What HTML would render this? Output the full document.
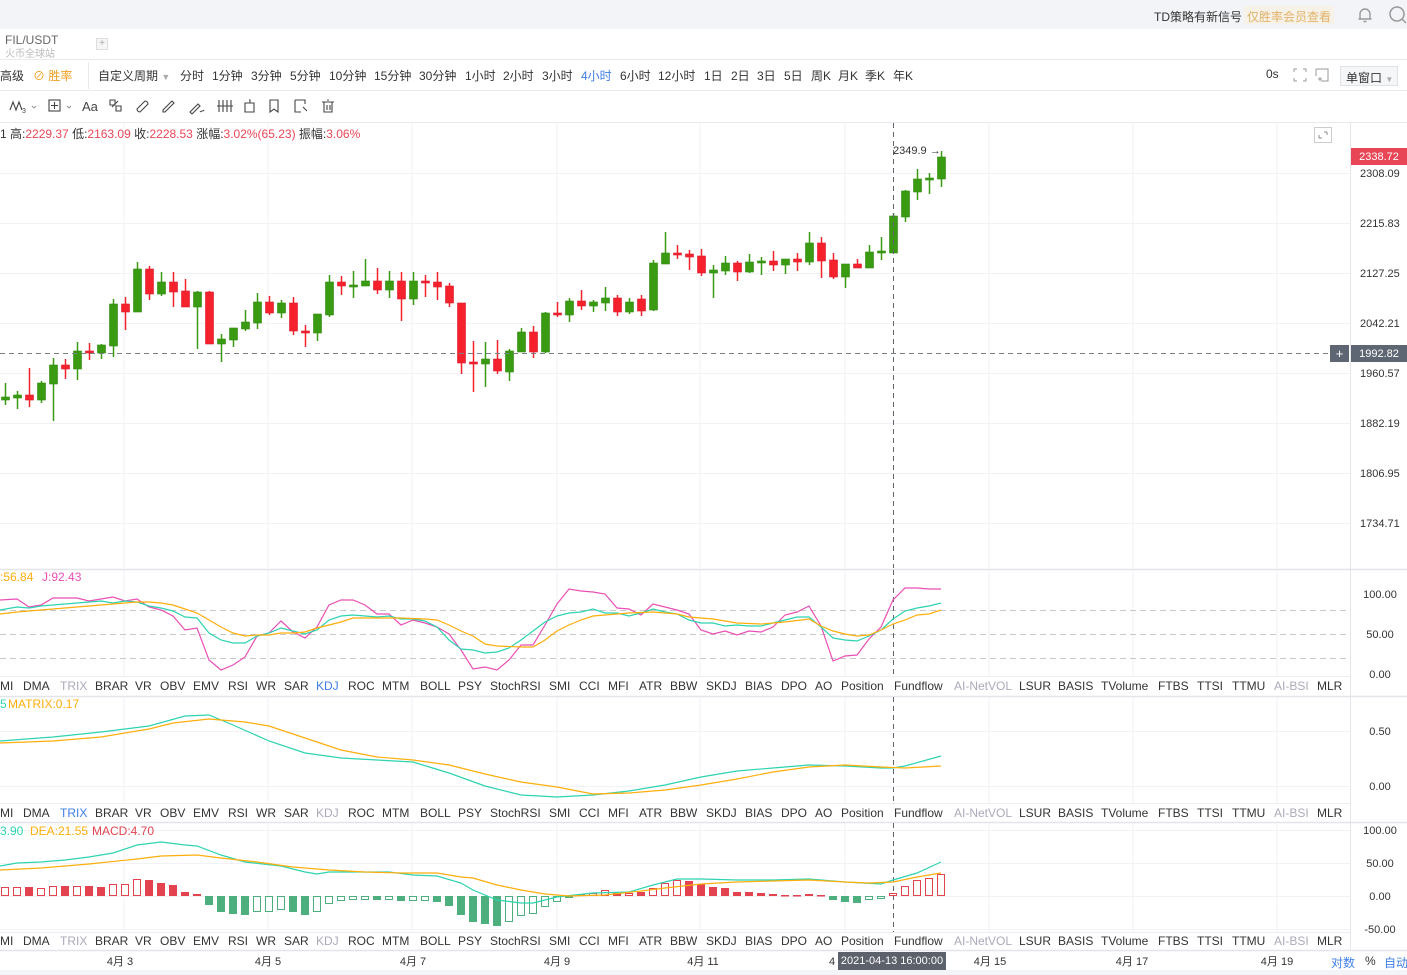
<!DOCTYPE html>
<html><head><meta charset="utf-8">
<style>
*{margin:0;padding:0;box-sizing:border-box}
body{width:1407px;height:975px;overflow:hidden;background:#fff;font-family:"Liberation Sans","Noto Sans CJK SC",sans-serif;font-size:12px;color:#333;position:relative}
.a{position:absolute;white-space:nowrap}
.hl{position:absolute;left:0;width:1407px;height:1px;background:#e8eaee}
.g{color:#aab}
.b{color:#3d7fe6}
.r{color:#e84656}
</style></head><body>
<div class="a" style="left:0;top:0;width:1407px;height:29px;background:#f3f4f7"></div>
<div class="a" style="left:1154px;top:8px;font-size:12px;color:#333">TD策略有新信号</div>
<div class="a" style="left:1244px;top:6px;height:18px;padding:2px 3px;background:#f7f2e8;color:#e0b26a;font-size:12px">仅胜率会员查看</div>
<svg class="a" style="left:1356px;top:6px" width="18" height="18" viewBox="0 0 18 18"><path d="M4 13V8a5 5 0 0 1 10 0v5M2.5 13h13M7.5 15.5h3" fill="none" stroke="#999" stroke-width="1.4"/></svg>
<svg class="a" style="left:1388px;top:5px" width="19" height="19" viewBox="0 0 19 19"><circle cx="9" cy="9" r="7" fill="none" stroke="#999" stroke-width="1.5"/><path d="M14 14l4 4" stroke="#999" stroke-width="1.5"/></svg>

<div class="a" style="left:5px;top:33px;font-size:12px;color:#666">FIL/USDT</div>
<div class="a" style="left:5px;top:45px;font-size:10px;color:#bbb">火币全球站</div>
<div class="a" style="left:96px;top:38px;width:12px;height:12px;border:1px solid #ddd;background:#f6f6f6;color:#aaa;font-size:10px;line-height:10px;text-align:center">+</div>
<div class="hl" style="top:59px"></div>

<div class="a" style="left:0;top:67px">高级</div>
<div class="a" style="left:33px;top:67px;color:#f0a020">⊘ 胜率</div>
<div class="a" style="left:88px;top:62px;width:1px;height:27px;background:#e8eaee"></div>
<div class="a" style="left:98px;top:67px">自定义周期 <span style="color:#aaa;font-size:9px">▼</span></div>
<div class="a" style="left:180px;top:67px">分时</div>
<div class="a" style="left:212px;top:67px">1分钟</div>
<div class="a" style="left:251px;top:67px">3分钟</div>
<div class="a" style="left:290px;top:67px">5分钟</div>
<div class="a" style="left:329px;top:67px">10分钟</div>
<div class="a" style="left:374px;top:67px">15分钟</div>
<div class="a" style="left:419px;top:67px">30分钟</div>
<div class="a" style="left:465px;top:67px">1小时</div>
<div class="a" style="left:503px;top:67px">2小时</div>
<div class="a" style="left:542px;top:67px">3小时</div>
<div class="a b" style="left:581px;top:67px">4小时</div>
<div class="a" style="left:620px;top:67px">6小时</div>
<div class="a" style="left:658px;top:67px">12小时</div>
<div class="a" style="left:704px;top:67px">1日</div>
<div class="a" style="left:731px;top:67px">2日</div>
<div class="a" style="left:757px;top:67px">3日</div>
<div class="a" style="left:784px;top:67px">5日</div>
<div class="a" style="left:811px;top:67px">周K</div>
<div class="a" style="left:838px;top:67px">月K</div>
<div class="a" style="left:865px;top:67px">季K</div>
<div class="a" style="left:893px;top:67px">年K</div>
<div class="a" style="left:1266px;top:67px">0s</div>
<svg class="a" style="left:1293px;top:68px" width="14" height="14"><path d="M1 4V1h3M10 1h3v3M13 10v3h-3M4 13H1v-3" fill="none" stroke="#999"/></svg>
<svg class="a" style="left:1315px;top:68px" width="14" height="14"><path d="M1 1h12v12H6M1 1v7M3 11h4M5 9v4" fill="none" stroke="#999"/></svg>
<div class="a" style="left:1340px;top:66px;width:58px;height:20px;border:1px solid #e0e2e6;background:#f5f6f8;padding:2px 5px;font-size:12px">单窗口 <span style="color:#aaa;font-size:8px">▼</span></div>
<div class="hl" style="top:90px"></div>

<svg class="a" style="left:0;top:94px" width="345" height="24" fill="none" stroke="#444" stroke-width="1.1">
<path d="M10 16l3-8 3 8 3-8 3 8"/><text x="22" y="19" font-size="7" fill="#444" stroke="none">3</text><path d="M32 12l2 2 2-2" stroke="#999"/>
<rect x="49" y="6" width="11" height="11"/><path d="M54.5 8v7M51 11.5h7"/><path d="M67 12l2 2 2-2" stroke="#999"/>
<text x="82" y="17" font-size="13" fill="#444" stroke="none" font-family="Liberation Sans">Aa</text>
<path d="M110 6h5v5h-5zM116 12h5v5h-5zM112 13l6-6"/>
<path d="M137 15l8-8a3 3 0 0 1 3 3l-8 8a3 3 0 0 1-3-3z"/>
<path d="M163 16l9-9 2 2-9 9h-2z"/>
<path d="M190 18l8-8 2 2-8 8zM200 18c2-2 3 0 4-2"/>
<path d="M219 6v12M223 6v12M227 6v12M231 6v12M217 12h16"/>
<path d="M245 9h9v9h-9zM249 6h1v3"/>
<path d="M270 6h8v12l-4-3-4 3z"/>
<path d="M295 6h10v4M295 6v12h6M303 13l4 4"/>
<path d="M322 8h12M324 8v10h8V8M327 6h2M327 11v5M330 11v5"/>
</svg>
<div class="hl" style="top:122px"></div>

<div class="a" style="left:0;top:125px">1 高:<span class="r">2229.37</span> 低:<span class="r">2163.09</span> 收:<span class="r">2228.53</span> 涨幅:<span class="r">3.02%(65.23)</span> 振幅:<span class="r">3.06%</span></div>
<svg class="a" style="left:1314px;top:127px" width="18" height="16"><rect x="0.5" y="0.5" width="17" height="15" fill="#fff" stroke="#ccc"/><path d="M5 11h3M5 11V8M13 5h-3M13 5v3" stroke="#888" fill="none"/></svg>

<svg id="ch" class="a" style="left:0;top:0" width="1407" height="975"></svg>

<div class="a" style="left:0;top:970px;width:1407px;height:5px;background:#f3f4f7"></div>
<div class="a" style="left:838px;top:952px;width:108px;height:18px;background:#5c616b;color:#fff;font-size:11px;line-height:18px;text-align:center">2021-04-13 16:00:00</div>
<div class="a b" style="left:1331px;top:954px">对数</div>
<div class="a" style="left:1365px;top:954px">%</div>
<div class="a b" style="left:1384px;top:954px">自动</div>

<script>
const S=document.getElementById('ch');let h='';
const L=(x1,y1,x2,y2,c,w,d)=>h+=`<line x1="${x1}" y1="${y1}" x2="${x2}" y2="${y2}" stroke="${c}" stroke-width="${w||1}" ${d?'stroke-dasharray="'+d+'"':''}/>`;
const T=(x,y,t,c,s,a)=>h+=`<text x="${x}" y="${y}" fill="${c||'#333'}" font-size="${s||11}" font-family="Liberation Sans, Noto Sans CJK SC, sans-serif" ${a?'text-anchor="'+a+'"':''}>${t}</text>`;
const gx=[124,268,412,557,700,845,989,1133,1277];
gx.forEach(x=>{L(x,123,x,568,'#f0f2f5');L(x,570,x,676,'#f0f2f5');L(x,697,x,803,'#f0f2f5');L(x,823,x,932,'#f0f2f5');});
[173,223,273,323,373,423,473,523].forEach(y=>L(0,y+.5,1350,y+.5,'#f0f2f5'));
[731,786].forEach(y=>L(0,y+.5,1350,y+.5,'#f0f2f5'));
[830,863,896,929].forEach(y=>L(0,y+.5,1350,y+.5,'#f0f2f5'));
[610,634,658].forEach(y=>L(0,y+.5,1350,y+.5,'#c8c8c8',1,'6 4'));
[569,696,822,950].forEach(y=>L(0,y+.5,1407,y+.5,'#e3e5e9',1.5));
[676,803,932].forEach(y=>L(0,y+.5,1350,y+.5,'#eceef1'));
L(1350.5,123,1350.5,950,'#e3e5e9');
[[173,'2308.09'],[223,'2215.83'],[273,'2127.25'],[323,'2042.21'],[373,'1960.57'],[423,'1882.19'],[473,'1806.95'],[523,'1734.71']].forEach(a=>T(1360,a[0]+4,a[1],'#333',11));
[[594,'100.00'],[634,'50.00'],[674,'0.00']].forEach(a=>T(1380,a[0]+4,a[1],'#333',11,'middle'));
[[731,'0.50'],[786,'0.00']].forEach(a=>T(1380,a[0]+4,a[1],'#333',11,'middle'));
[[830,'100.00'],[863,'50.00'],[896,'0.00'],[929,'-50.00']].forEach(a=>T(1380,a[0]+4,a[1],'#333',11,'middle'));
const C=[[397,400,383,405,1],[395,398,391,409,1],[395,400,368,407,0],[383,400,381,403,1],[365,384,358,421,1],[365,369,359,379,0],[351,369,342,380,1],[351,353,343,360,0],[345,353,344,359,1],[304,346,299,357,1],[304,312,297,330,0],[269,312,262,312,1],[269,294,266,300,0],[282,294,272,296,1],[282,292,272,307,0],[291,307,279,307,0],[292,307,291,349,1],[292,344,291,344,0],[339,344,334,362,1],[328,340,328,347,1],[322,329,310,331,1],[302,323,293,329,1],[302,313,296,315,0],[303,313,300,318,1],[303,331,297,335,0],[331,333,325,347,0],[314,333,314,341,1],[282,315,275,317,1],[282,286,276,295,0],[285,286,271,298,1],[281,286,259,286,1],[281,290,268,294,0],[281,290,271,298,1],[281,299,272,321,0],[281,299,272,305,1],[281,283,275,297,0],[282,287,272,300,0],[286,303,283,307,0],[303,363,303,374,0],[362,363,341,392,0],[359,364,342,387,1],[359,371,340,374,0],[351,372,349,381,1],[332,352,328,352,1],[332,352,326,358,0],[313,352,312,353,1],[313,315,302,317,0],[301,315,298,322,1],[301,306,290,310,0],[302,306,300,312,1],[298,303,287,311,1],[298,312,295,316,0],[302,312,298,314,1],[299,311,295,316,0],[263,310,260,311,1],[253,264,232,264,1],[253,255,245,259,0],[254,257,250,270,0],[256,273,249,276,0],[270,273,265,298,1],[263,271,256,275,1],[263,272,261,281,0],[262,272,254,273,1],[261,263,257,275,1],[261,265,251,271,0],[259,265,259,274,1],[259,262,253,271,0],[243,262,232,265,1],[243,261,237,278,0],[260,277,253,279,0],[264,277,264,288,1],[264,268,259,268,0],[252,268,245,268,1],[251,252,237,260,1],[216,253,213,253,1],[191,217,190,222,1],[179,192,169,200,1],[178,180,173,194,1],[157,179,151,187,1]];
C.forEach((c,i)=>{const x=5+12*i,col=c[4]?'#3a9b12':'#f5222d',bc=c[4]?'#2f8a0c':'#d91a2a';
L(x+.5,c[2],x+.5,c[3],col,1.5);h+=`<rect x="${x-3.5}" y="${c[0]}" width="8" height="${Math.max(2,c[1]-c[0])}" fill="${col}" stroke="${bc}" stroke-width="0.6"/>`;});
L(0,353.5,1330,353.5,'#7a8088',1,'5 4');
[[123,568],[570,676],[697,803],[823,932]].forEach(s=>L(893.5,s[0],893.5,s[1],'#5e6570',1,'5 4'));
T(893,154,'2349.9 →','#333',11);
h+=`<rect x="1351" y="148" width="56" height="17" fill="#e84656"/>`;T(1379,160,'2338.72','#fff',11,'middle');
h+=`<rect x="1330" y="345" width="19" height="17" fill="#5f6673"/><rect x="1351" y="345" width="56" height="17" fill="#5f6673"/>`;T(1339.5,358,'+','#fff',13,'middle');T(1379,357,'1992.82','#fff',11,'middle');
const P=(a,c)=>{let s='';for(let i=0;i<a.length;i+=2)s+=a[i]+','+a[i+1]+' ';h+=`<polyline points="${s}" fill="none" stroke="${c}" stroke-width="1.2"/>`;};
P([0,600,17,599,29,607,41,605,53,598,77,598,89,601,101,599,113,597,125,601,137,599,149,607,161,610,173,616,185,630,197,628,209,660,221,670,233,665,245,657,257,636,269,633,281,621,293,632,305,638,317,627,329,605,341,600,353,600,365,605,377,614,389,614,401,625,413,620,425,623,437,627,449,634,461,650,473,669,485,667,497,670,509,660,521,645,533,645,545,625,557,604,569,589,581,591,593,592,605,594,617,608,629,609,641,615,653,604,665,607,677,610,689,614,701,630,713,634,725,631,737,635,749,631,761,632,773,627,785,615,797,612,809,606,821,626,833,661,845,656,857,655,869,639,881,627,893,600,905,588,917,588,929,589,941,589],'#ea4fb5');
P([0,610,17,607,29,608,41,606,53,605,77,603,101,601,113,603,125,601,137,602,149,606,161,608,173,611,185,617,197,618,209,633,221,640,233,643,245,643,257,636,269,633,281,628,293,631,305,634,317,630,329,620,341,616,353,615,365,616,377,617,389,616,401,619,413,619,425,621,437,627,449,640,461,649,473,650,485,653,497,652,509,648,521,640,533,631,545,622,557,616,569,613,581,612,593,609,605,613,617,613,629,616,641,613,653,609,665,612,677,614,689,620,701,623,713,623,725,626,737,625,749,626,761,626,773,623,785,620,797,617,809,617,821,627,833,638,845,640,857,641,869,636,881,630,893,619,905,611,917,608,929,606,941,603],'#2ed3b0');
P([0,614,17,612,29,611,41,610,53,609,77,607,101,605,113,604,125,603,137,602,149,602,161,603,173,605,185,609,197,613,209,620,221,627,233,633,245,636,257,635,269,635,281,633,293,633,305,632,317,628,329,625,341,622,353,618,401,618,425,619,437,620,449,625,461,631,473,636,485,644,497,646,521,647,533,647,545,640,557,631,569,625,581,620,593,616,605,615,629,613,653,612,677,614,689,617,713,619,737,623,761,624,785,622,809,619,821,626,833,631,845,634,857,636,869,635,881,630,893,624,905,620,917,615,929,614,941,610],'#ffae0d');
T(0,581,':56.84','#ffae0d',12);T(42,581,'J:92.43','#ea4fb5',12);
P([0,741,53,737,101,732,149,726,185,716,209,715,233,725,269,741,305,753,341,758,377,760,413,762,449,773,485,786,521,795,557,797,593,795,629,791,665,785,701,777,737,771,773,768,809,765,845,766,881,768,893,768,905,766,941,756],'#2ed3b0');
P([0,743,53,741,101,737,149,729,173,723,209,719,245,722,269,726,305,738,341,750,377,757,413,760,449,765,485,774,521,782,557,787,593,794,629,793,665,790,701,785,737,779,773,772,809,767,845,765,881,767,905,768,941,766],'#ffae0d');
T(0,708,'5','#2ed3b0',12);T(8,708,'MATRIX:0.17','#ffae0d',12);
const H=[[5,887,0],[17,887,0],[29,887,1],[41,888,0],[53,886,0],[65,886,1],[77,886,0],[89,886,1],[101,887,1],[113,884,0],[125,884,0],[137,879,0],[149,880,1],[161,883,1],[173,885,1],[185,892,1],[197,894,1],[209,905,1],[221,912,1],[233,914,1],[245,915,1],[257,912,0],[269,912,0],[281,910,0],[293,912,1],[305,915,1],[317,912,0],[329,904,0],[341,901,0],[353,900,0],[365,900,0],[377,900,1],[389,900,0],[401,901,1],[413,901,0],[425,901,0],[437,902,1],[449,906,1],[461,915,1],[473,922,1],[485,924,1],[497,926,1],[509,922,0],[521,916,0],[533,914,0],[545,907,0],[557,902,0],[569,897,0],[581,894,1],[593,893,0],[605,890,0],[617,893,1],[629,893,0],[641,892,1],[653,888,0],[665,883,0],[677,880,0],[689,881,1],[701,884,1],[713,887,1],[725,888,1],[737,892,1],[749,892,1],[761,893,1],[773,894,1],[785,895,1],[797,895,1],[809,894,1],[821,895,1],[833,900,1],[845,902,1],[857,903,1],[869,900,0],[881,899,0],[893,893,0],[905,886,0],[917,880,0],[929,878,0],[941,874,0]];
H.forEach(b=>{const x=b[0],z=896,red=b[1]<z,col=red?'#e2434f':'#4caf7d',t=Math.min(b[1],z),hh=Math.max(1.5,Math.abs(b[1]-z));
h+=b[2]?`<rect x="${x-4}" y="${t}" width="8" height="${hh}" fill="${col}"/>`:`<rect x="${x-3.5}" y="${t+.5}" width="7" height="${Math.max(1,hh-1)}" fill="#fff" stroke="${col}" stroke-width="1"/>`;});
P([0,866,17,863,41,862,65,860,89,857,113,853,137,845,161,842,185,845,197,846,221,855,245,862,281,866,305,872,317,874,329,872,389,872,413,875,437,876,461,883,473,890,497,900,521,903,533,903,557,897,593,893,629,892,653,885,677,879,701,879,737,880,773,880,809,879,845,882,881,884,893,880,917,873,941,862],'#2ed3b0');
P([0,870,41,868,89,864,137,859,161,856,197,855,221,858,257,862,293,867,329,870,365,872,401,873,437,873,461,877,473,878,497,885,521,890,545,894,569,896,605,895,641,891,665,888,701,884,737,882,773,881,809,880,845,882,869,883,893,882,917,877,941,873],'#ffae0d');
T(0,835,'3.90','#2ed3b0',12);T(30,835,'DEA:21.55','#ffae0d',12);T(92,835,'MACD:4.70','#e2434f',12);
const tb=[['MI',0],['DMA',23],['TRIX',60],['BRAR',95],['VR',135],['OBV',160],['EMV',193],['RSI',228],['WR',256],['SAR',284],['KDJ',316],['ROC',348],['MTM',382],['BOLL',420],['PSY',458],['StochRSI',490],['SMI',549],['CCI',579],['MFI',608],['ATR',639],['BBW',670],['SKDJ',706],['BIAS',745],['DPO',781],['AO',815],['Position',841],['Fundflow',894],['AI-NetVOL',954],['LSUR',1019],['BASIS',1058],['TVolume',1101],['FTBS',1158],['TTSI',1197],['TTMU',1232],['AI-BSI',1274],['MLR',1317]];
[[689,'KDJ'],[816,'TRIX'],[944,'']].forEach(r=>{tb.forEach(t=>{let c='#333';if(t[0]=='AI-NetVOL'||t[0]=='AI-BSI')c='#aab';else if(t[0]==r[1])c='#3d7fe6';else if(t[0]=='KDJ'||t[0]=='TRIX')c='#aab';T(t[1],r[0]+1,t[0],c,12);});});
[[120,'4月 3'],[268,'4月 5'],[413,'4月 7'],[557,'4月 9'],[703,'4月 11'],[990,'4月 15'],[1132,'4月 17'],[1277,'4月 19']].forEach(d=>T(d[0],965,d[1],'#333',11,'middle'));
T(829,965,'4','#333',11);
S.innerHTML=h;
</script>
</body></html>
